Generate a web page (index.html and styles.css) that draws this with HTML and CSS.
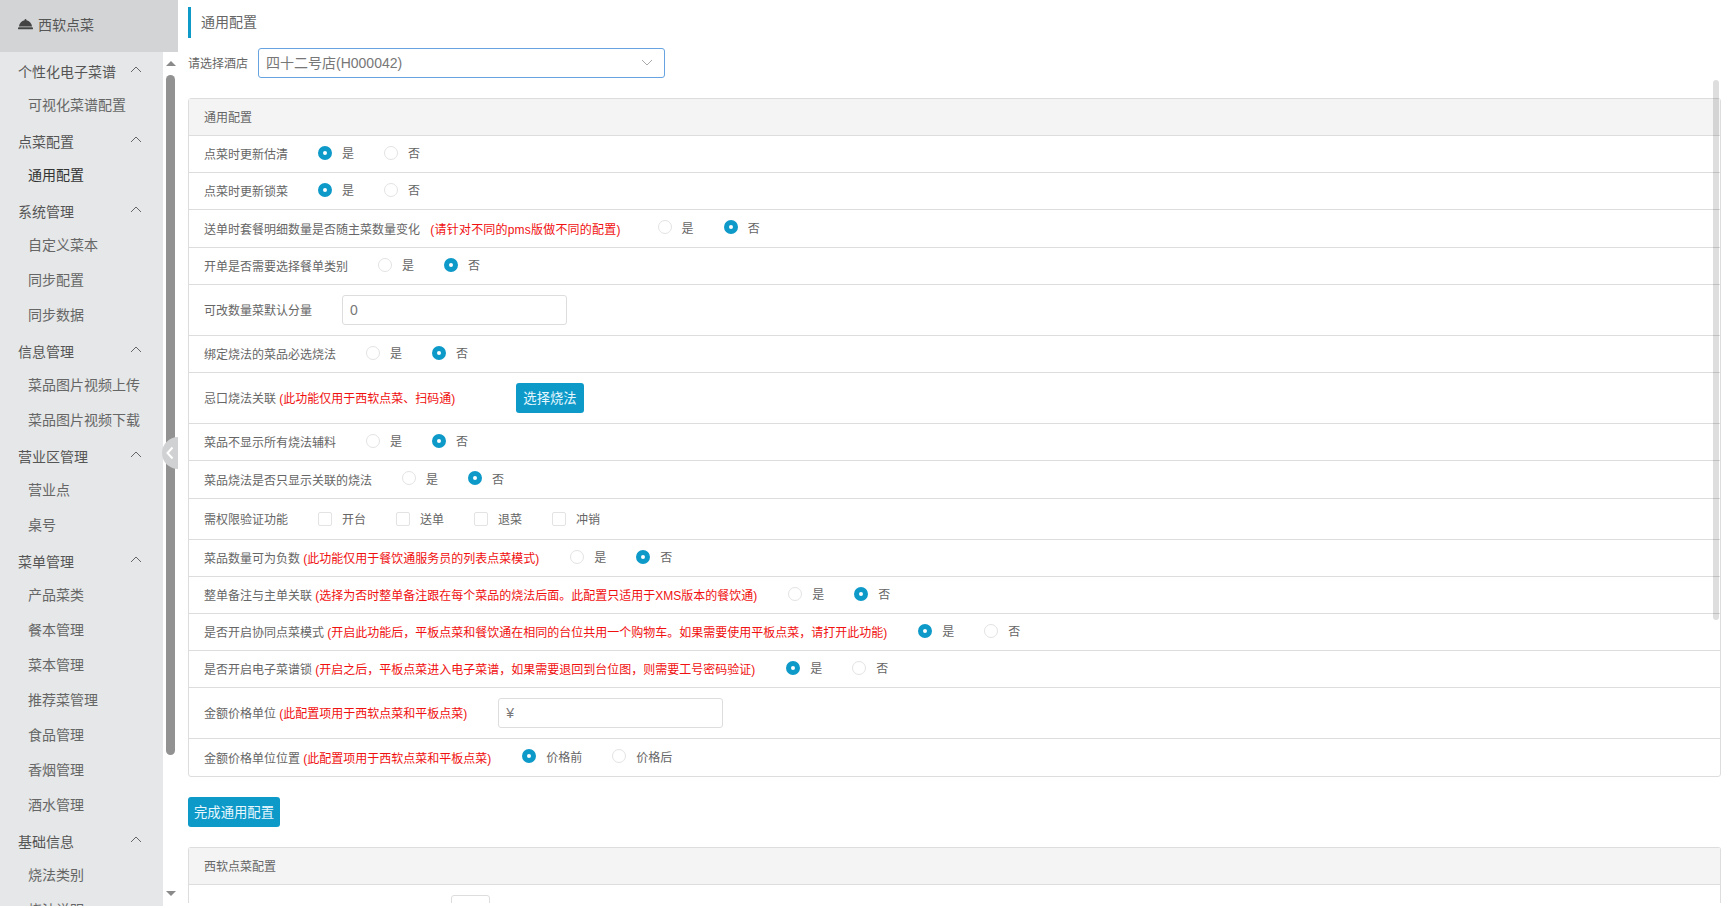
FILE: index.html
```html
<!DOCTYPE html>
<html lang="zh-CN">
<head>
<meta charset="utf-8">
<title>通用配置</title>
<link rel="stylesheet" href="styles.css">
</head>
<body>
<div class="page">
  <aside class="sidebar">
    <div class="brand">
      <svg class="brand-icon" viewBox="0 0 16 12" width="15" height="12"><path d="M8 0.6a1 1 0 0 1 1 1v.5C12.4 2.7 14.6 5.5 15 8.6H1C1.4 5.5 3.6 2.7 7 2.1v-.5a1 1 0 0 1 1-1z" fill="#444"/><rect x="0" y="9.5" width="16" height="2.2" rx="1" fill="#444"/></svg>
      <span>西软点菜</span>
    </div>
    <div class="side-body">
      <nav class="menu">
        <div class="group"><span>个性化电子菜谱</span><svg class="caret" viewBox="0 0 12 7" width="12" height="7"><path d="M1 6l5-5 5 5" fill="none" stroke="#666" stroke-width="1"/></svg></div>
        <div class="item">可视化菜谱配置</div>
        <div class="group"><span>点菜配置</span><svg class="caret" viewBox="0 0 12 7" width="12" height="7"><path d="M1 6l5-5 5 5" fill="none" stroke="#666" stroke-width="1"/></svg></div>
        <div class="item active">通用配置</div>
        <div class="group"><span>系统管理</span><svg class="caret" viewBox="0 0 12 7" width="12" height="7"><path d="M1 6l5-5 5 5" fill="none" stroke="#666" stroke-width="1"/></svg></div>
        <div class="item">自定义菜本</div>
        <div class="item">同步配置</div>
        <div class="item">同步数据</div>
        <div class="group"><span>信息管理</span><svg class="caret" viewBox="0 0 12 7" width="12" height="7"><path d="M1 6l5-5 5 5" fill="none" stroke="#666" stroke-width="1"/></svg></div>
        <div class="item">菜品图片视频上传</div>
        <div class="item">菜品图片视频下载</div>
        <div class="group"><span>营业区管理</span><svg class="caret" viewBox="0 0 12 7" width="12" height="7"><path d="M1 6l5-5 5 5" fill="none" stroke="#666" stroke-width="1"/></svg></div>
        <div class="item">营业点</div>
        <div class="item">桌号</div>
        <div class="group"><span>菜单管理</span><svg class="caret" viewBox="0 0 12 7" width="12" height="7"><path d="M1 6l5-5 5 5" fill="none" stroke="#666" stroke-width="1"/></svg></div>
        <div class="item">产品菜类</div>
        <div class="item">餐本管理</div>
        <div class="item">菜本管理</div>
        <div class="item">推荐菜管理</div>
        <div class="item">食品管理</div>
        <div class="item">香烟管理</div>
        <div class="item">酒水管理</div>
        <div class="group"><span>基础信息</span><svg class="caret" viewBox="0 0 12 7" width="12" height="7"><path d="M1 6l5-5 5 5" fill="none" stroke="#666" stroke-width="1"/></svg></div>
        <div class="item">烧法类别</div>
        <div class="item">烧法说明</div>
      </nav>
      <div class="side-scroll">
        <span class="arrow-up"></span>
        <span class="thumb"></span>
        <span class="arrow-down"></span>
      </div>
    </div>
    <div class="collapse">
      <svg viewBox="0 0 8 14" width="8" height="14"><path d="M6.5 1.5L1.5 7l5 5.5" fill="none" stroke="#fff" stroke-width="2"/></svg>
    </div>
  </aside>

  <main class="main">
    <h1 class="title">通用配置</h1>
    <div class="hotel">
      <span class="hotel-label">请选择酒店</span>
      <div class="select">
        <span>四十二号店(H000042)</span>
        <svg viewBox="0 0 12 7" width="12" height="7"><path d="M1 1l5 5 5-5" fill="none" stroke="#aaa" stroke-width="1"/></svg>
      </div>
    </div>

    <section class="panel">
      <div class="panel-head">通用配置</div>
      <div class="row">
        <span class="label">点菜时更新估清</span>
        <div class="opts">
          <span class="opt"><i class="radio on"></i>是</span>
          <span class="opt"><i class="radio"></i>否</span>
        </div>
      </div>
      <div class="row">
        <span class="label">点菜时更新锁菜</span>
        <div class="opts">
          <span class="opt"><i class="radio on"></i>是</span>
          <span class="opt"><i class="radio"></i>否</span>
        </div>
      </div>
      <div class="row row-38">
        <span class="label">送单时套餐明细数量是否随主菜数量变化 <b class="red spaced">(请针对不同的pms版做不同的配置)</b></span>
        <div class="opts">
          <span class="opt"><i class="radio"></i>是</span>
          <span class="opt"><i class="radio on"></i>否</span>
        </div>
      </div>
      <div class="row">
        <span class="label">开单是否需要选择餐单类别</span>
        <div class="opts">
          <span class="opt"><i class="radio"></i>是</span>
          <span class="opt"><i class="radio on"></i>否</span>
        </div>
      </div>
      <div class="row row-tall">
        <span class="label">可改数量菜默认分量</span>
        <div class="input">0</div>
      </div>
      <div class="row">
        <span class="label">绑定烧法的菜品必选烧法</span>
        <div class="opts">
          <span class="opt"><i class="radio"></i>是</span>
          <span class="opt"><i class="radio on"></i>否</span>
        </div>
      </div>
      <div class="row row-tall">
        <span class="label">忌口烧法关联 <b class="red">(此功能仅用于西软点菜、扫码通)</b></span>
        <button class="btn btn-wide-gap" type="button">选择烧法</button>
      </div>
      <div class="row">
        <span class="label">菜品不显示所有烧法辅料</span>
        <div class="opts">
          <span class="opt"><i class="radio"></i>是</span>
          <span class="opt"><i class="radio on"></i>否</span>
        </div>
      </div>
      <div class="row row-38">
        <span class="label">菜品烧法是否只显示关联的烧法</span>
        <div class="opts">
          <span class="opt"><i class="radio"></i>是</span>
          <span class="opt"><i class="radio on"></i>否</span>
        </div>
      </div>
      <div class="row row-41">
        <span class="label">需权限验证功能</span>
        <div class="opts">
          <span class="opt"><i class="check"></i>开台</span>
          <span class="opt"><i class="check"></i>送单</span>
          <span class="opt"><i class="check"></i>退菜</span>
          <span class="opt"><i class="check"></i>冲销</span>
        </div>
      </div>
      <div class="row">
        <span class="label">菜品数量可为负数 <b class="red">(此功能仅用于餐饮通服务员的列表点菜模式)</b></span>
        <div class="opts">
          <span class="opt"><i class="radio"></i>是</span>
          <span class="opt"><i class="radio on"></i>否</span>
        </div>
      </div>
      <div class="row">
        <span class="label">整单备注与主单关联 <b class="red">(选择为否时整单备注跟在每个菜品的烧法后面。此配置只适用于XMS版本的餐饮通)</b></span>
        <div class="opts">
          <span class="opt"><i class="radio"></i>是</span>
          <span class="opt"><i class="radio on"></i>否</span>
        </div>
      </div>
      <div class="row">
        <span class="label">是否开启协同点菜模式 <b class="red">(开启此功能后，平板点菜和餐饮通在相同的台位共用一个购物车。如果需要使用平板点菜，请打开此功能)</b></span>
        <div class="opts">
          <span class="opt"><i class="radio on"></i>是</span>
          <span class="opt"><i class="radio"></i>否</span>
        </div>
      </div>
      <div class="row">
        <span class="label">是否开启电子菜谱锁 <b class="red">(开启之后，平板点菜进入电子菜谱，如果需要退回到台位图，则需要工号密码验证)</b></span>
        <div class="opts">
          <span class="opt"><i class="radio on"></i>是</span>
          <span class="opt"><i class="radio"></i>否</span>
        </div>
      </div>
      <div class="row row-tall">
        <span class="label">金额价格单位 <b class="red">(此配置项用于西软点菜和平板点菜)</b></span>
        <div class="input">¥</div>
      </div>
      <div class="row row-last">
        <span class="label">金额价格单位位置 <b class="red">(此配置项用于西软点菜和平板点菜)</b></span>
        <div class="opts">
          <span class="opt"><i class="radio on"></i>价格前</span>
          <span class="opt"><i class="radio"></i>价格后</span>
        </div>
      </div>
    </section>

    <button class="btn btn-done" type="button">完成通用配置</button>

    <section class="panel panel-second">
      <div class="panel-head">西软点菜配置</div>
      <div class="row row-tall row-input-only">
        <div class="input input-small"></div>
      </div>
    </section>

    <div class="main-thumb"></div>
  </main>
</div>
</body>
</html>
```
FILE: styles.css
```css
* { box-sizing: border-box; }
html, body { margin: 0; padding: 0; height: 100%; background: #fff; overflow: hidden; }
body { font-family: "Liberation Sans", "Noto Sans CJK SC", sans-serif; color: #666; font-size: 12px; }

.page { display: flex; height: 908px; align-items: flex-start; }

/* sidebar */
.sidebar { position: relative; width: 178px; height: 906px; flex: none; display: flex; flex-direction: column; }
.brand { height: 52px; background: #d3d4d6; display: flex; align-items: center; padding: 0 0 4px 18px; gap: 5px; font-size: 14px; color: #555; flex: none; }
.brand-icon { flex: none; }
.side-body { flex: 1; min-height: 0; display: flex; }
.menu { width: 163px; flex: none; background: #e5e7e8; overflow: hidden; padding-top: 1px; }
.group { height: 35px; padding: 4px 21px 0 18px; line-height: 31px; font-size: 14px; color: #555; display: flex; justify-content: space-between; align-items: center; }
.caret { margin-bottom: 7px; flex: none; }
.item { height: 35px; line-height: 35px; padding-left: 28px; font-size: 14px; color: #666; white-space: nowrap; }
.item.active { color: #333; }
.side-scroll { width: 15px; flex: none; display: flex; flex-direction: column; align-items: center; background: #fff; padding: 9px 0 10px; }
.arrow-up { width: 0; height: 0; border-left: 5px solid transparent; border-right: 5px solid transparent; border-bottom: 5px solid #8a8a8a; }
.thumb { width: 9px; height: 680px; margin-top: 9px; background: #929292; border-radius: 5px; }
.arrow-down { width: 0; height: 0; margin-top: auto; border-left: 5px solid transparent; border-right: 5px solid transparent; border-top: 5px solid #8a8a8a; }
.collapse { position: absolute; left: 162px; top: 437px; width: 16px; height: 32px; background: #d0d1d2; border-radius: 16px 0 0 16px; display: flex; align-items: center; justify-content: center; }

/* main */
.main { position: relative; flex: 1; min-width: 0; height: 903px; overflow: hidden; padding: 7px 9px 0 10px; }
.title { margin: 0; height: 31px; line-height: 31px; border-left: 3px solid #0e9ac9; padding-left: 10px; font-size: 14px; font-weight: normal; color: #666; }
.hotel { display: flex; align-items: center; gap: 10px; margin-top: 10px; height: 30px; }
.hotel-label { width: 60px; flex: none; white-space: nowrap; padding-bottom: 2px; }
.select { width: 407px; height: 30px; border: 1px solid #66a3e0; border-radius: 3px; padding: 0 11px 2px 7px; font-size: 14px; display: flex; align-items: center; justify-content: space-between; color: #777; }

.panel { margin-top: 20px; border: 1px solid #ddd; border-radius: 3px; }
.panel-head { height: 37px; line-height: 38px; padding-left: 15px; background: #f4f4f4; border-bottom: 1px solid #ddd; color: #666; }
.row { height: 37px; border-bottom: 1px solid #ddd; padding-left: 15px; display: flex; align-items: center; white-space: nowrap; }
.row-38 { height: 38px; }
.row-41 { height: 41px; }
.row-tall { height: 51px; }
.row-last { border-bottom: 0; height: 37px; }
.label { margin-right: 30px; padding-bottom: 1px; }
.red { color: #f01010; font-weight: normal; padding-right: 1px; }
.spaced { margin-left: 7px; margin-right: 6px; letter-spacing: 0.2px; }

.opts { display: flex; gap: 30px; padding-bottom: 3px; }
.row-41 .opts { padding-bottom: 1px; }
.opt { display: flex; align-items: center; gap: 10px; }
.radio { width: 14px; height: 14px; border-radius: 50%; border: 1px solid #e3e3e3; background: #fff; flex: none; position: relative; }
.radio.on { border: 5px solid #0e9ac9; background: #fff; }
.check { width: 14px; height: 14px; border: 1px solid #e3e3e3; border-radius: 2px; background: #fff; flex: none; }

.input { width: 225px; height: 30px; border: 1px solid #ddd; border-radius: 3px; line-height: 28px; padding-left: 7px; font-size: 14px; color: #777; }
.input-small { width: 39px; }
.row-input-only { padding-left: 262px; align-items: flex-start; padding-top: 10px; }

.btn { border: 0; border-radius: 3px; background: #0e9ac9; color: #e8f8ff; height: 30px; padding: 0 7px 2px; font-family: inherit; font-size: 13.33px; white-space: nowrap; }
.btn-wide-gap { margin-left: 30px; }
.btn-done { display: block; margin-top: 20px; width: 92px; padding: 0 0 2px; }
.panel-second { border-bottom: 0; border-radius: 3px 3px 0 0; }

.main-thumb { position: absolute; top: 80px; right: 11px; width: 6px; height: 540px; border-radius: 3px; background: rgba(0, 0, 0, 0.13); }
```
